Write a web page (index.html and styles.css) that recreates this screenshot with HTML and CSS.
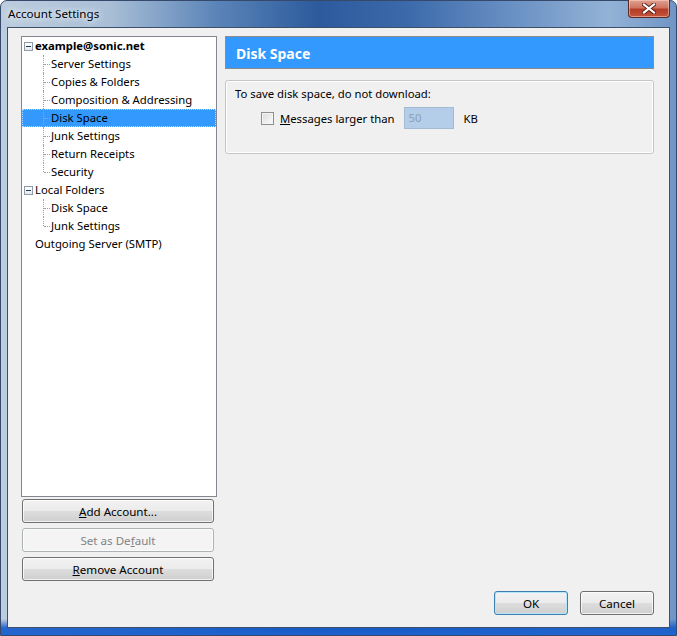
FILE: index.html
```html
<!DOCTYPE html>
<html lang="en">
<head>
<meta charset="UTF-8" />
<title>Account Settings</title>
<link rel="stylesheet" href="styles.css">
</head>
<body>

<div class="window">
  <div class="titlebar">
    <span class="title">Account Settings</span>
    <div class="close-btn">
      <svg width="14" height="11" viewBox="0 0 14 11">
        <path d="M2 1.5 L12 9.5 M12 1.5 L2 9.5" stroke="#5a1d14" stroke-width="4" stroke-linecap="square" />
        <path d="M2 1.5 L12 9.5 M12 1.5 L2 9.5" stroke="#ffffff" stroke-width="2.2" stroke-linecap="square" />
      </svg>
    </div>
  </div>

  <div class="client">
    <div class="main">
      <div class="left">
        <div class="tree">
          <div class="row parent"><span class="twisty"></span><b>example@sonic.net</b></div>
          <div class="row child">Server Settings</div>
          <div class="row child">Copies &amp; Folders</div>
          <div class="row child">Composition &amp; Addressing</div>
          <div class="row child selected">Disk Space</div>
          <div class="row child">Junk Settings</div>
          <div class="row child">Return Receipts</div>
          <div class="row child last">Security</div>
          <div class="row parent"><span class="twisty"></span>Local Folders</div>
          <div class="row child">Disk Space</div>
          <div class="row child last">Junk Settings</div>
          <div class="row parent leaf">Outgoing Server (SMTP)</div>
        </div>
        <div class="acct-buttons">
          <button class="btn"><u>A</u>dd Account...</button>
          <button class="btn" disabled>Set as De<u>f</u>ault</button>
          <button class="btn"><u>R</u>emove Account</button>
        </div>
      </div>

      <div class="right">
        <div class="banner">Disk Space</div>
        <div class="groupbox">
          <div class="group-label">To save disk space, do not download:</div>
          <div class="check-row">
            <span class="checkbox"></span>
            <span class="check-label"><u>M</u>essages larger than</span>
            <span class="size-input">50</span>
            <span class="unit">KB</span>
          </div>
        </div>
      </div>
    </div>

    <div class="dialog-buttons">
      <button class="btn default">OK</button>
      <button class="btn">Cancel</button>
    </div>
  </div>
</div>

</body>
</html>
```

FILE: styles.css
```css
body {
  margin: 0;
  font-family: 'Noto Sans', 'Open Sans', sans-serif;
  font-size: 11.3px;
  color: #000;
  background: #fff;
}
.window {
  width: 677px;
  height: 636px;
  box-sizing: border-box;
  border: 1px solid #37496a;
  border-radius: 7px 7px 0 0;
  background:
    linear-gradient(to bottom, rgba(255,255,255,0) 0, rgba(255,255,255,0) 618px, rgba(20,90,200,0.9) 627px, rgba(30,100,210,1) 636px),
    linear-gradient(to right, #bccddf 0%, #a9bfd6 16%, #5a84b8 32%, #2c5a9c 47%, #3b69aa 60%, #6a91c4 76%, #93b2d6 90%, #6f95c6 100%);
  display: flex;
  flex-direction: column;
}
.titlebar {
  height: 26px;
  display: flex;
  justify-content: space-between;
  align-items: flex-start;
  padding-left: 7px;
}
.title {
  margin-top: 5px;
  font-size: 11.6px;
  color: #000;
  text-shadow: 0 0 6px #fff, 0 0 10px rgba(255,255,255,0.8);
}
.close-btn {
  width: 42px;
  height: 18px;
  margin-right: 6px;
  margin-top: -1px;
  box-sizing: border-box;
  border: 1px solid #5b2a24;
  border-top: none;
  border-radius: 0 0 4px 4px;
  background: linear-gradient(to bottom, #e0a091 0%, #cf7461 45%, #b43c28 55%, #c5543b 100%);
  box-shadow: inset 0 0 0 1px rgba(255,220,210,0.5);
  display: flex;
  align-items: center;
  justify-content: center;
}
.client {
  margin: 0 6px;
  height: 601px;
  box-sizing: border-box;
  border: 1px solid #3d4f69;
  background: #f0f0f0;
  padding: 8px 15px 12px 13px;
  display: flex;
  flex-direction: column;
}
.main {
  display: flex;
  gap: 8px;
  height: 545px;
}
.left {
  width: 196px;
  display: flex;
  flex-direction: column;
}
.tree {
  height: 461px;
  box-sizing: border-box;
  border: 1px solid #828790;
  background: #fff;
}
.row {
  height: 18px;
  line-height: 18px;
  position: relative;
  white-space: nowrap;
  box-sizing: border-box;
}
.row.parent {
  padding-left: 13px;
}
.row.child {
  padding-left: 29px;
}
.row.child::before {
  content: "";
  position: absolute;
  left: 21px;
  top: 0;
  height: 18px;
  border-left: 1px dotted #a0a0a0;
}
.row.child.last::before {
  height: 9px;
}
.row.child::after {
  content: "";
  position: absolute;
  left: 22px;
  top: 9px;
  width: 6px;
  border-top: 1px dotted #a0a0a0;
}
.twisty {
  position: absolute;
  left: 2px;
  top: 5px;
  width: 9px;
  height: 9px;
  box-sizing: border-box;
  border: 1px solid #919ba9;
  background: linear-gradient(to bottom, #fff, #e6e9ee);
}
.twisty::after {
  content: "";
  position: absolute;
  left: 1px;
  top: 3px;
  width: 5px;
  height: 1px;
  background: #1e3a5e;
}
.row.selected {
  background: #3399ff;
  outline: 1px dotted #bcdcff;
  outline-offset: -1px;
}
.acct-buttons {
  display: flex;
  flex-direction: column;
  gap: 5px;
  margin: 2px 3px 0 1px;
}
.btn {
  font-family: inherit;
  font-size: 11.6px;
  color: #000;
  height: 24px;
  padding: 0 8px;
  border: 1px solid #707070;
  border-radius: 3px;
  background: linear-gradient(to bottom, #f2f2f2 0%, #ebebeb 48%, #dddddd 52%, #cfcfcf 100%);
  box-shadow: inset 0 0 0 1px rgba(255,255,255,0.75);
}
.btn:disabled {
  color: #838383;
  border-color: #adb2b5;
  background: #f4f4f4;
}
.btn.default {
  border-color: #3c7fb1;
  box-shadow: inset 0 0 0 1px #b6e6fb;
}
.right {
  flex: 1;
  display: flex;
  flex-direction: column;
}
.banner {
  height: 33px;
  box-sizing: border-box;
  border: 1px solid #8c8c8c;
  background: #3399ff;
  color: #fff;
  font-weight: bold;
  font-size: 14px;
  line-height: 33px;
  padding-left: 10px;
}
.groupbox {
  margin-top: 11px;
  height: 74px;
  box-sizing: border-box;
  border: 1px solid #c5c5c5;
  border-radius: 3px;
  box-shadow: inset 0 0 0 1px #fff;
  padding: 4px 0 0 9px;
}
.group-label {
  height: 17px;
  line-height: 17px;
}
.check-row {
  display: flex;
  align-items: center;
  margin-top: 5px;
  padding-left: 26px;
}
.checkbox {
  width: 13px;
  height: 13px;
  box-sizing: border-box;
  border: 1px solid #8e8f8f;
  background: linear-gradient(135deg, #dcdcdc, #fbfbfb);
  box-shadow: inset 0 0 0 1px #f4f4f4;
}
.check-label {
  margin-left: 6px;
}
.size-input {
  margin-left: 9px;
  width: 50px;
  height: 22px;
  box-sizing: border-box;
  border: 1px solid #a4bad2;
  background: #b4cde8;
  color: #8d9fb5;
  line-height: 20px;
  padding-left: 4px;
}
.unit {
  margin-left: 10px;
}
.dialog-buttons {
  margin-top: 10px;
  display: flex;
  justify-content: flex-end;
  gap: 12px;
}
.dialog-buttons .btn {
  width: 74px;
}
```
